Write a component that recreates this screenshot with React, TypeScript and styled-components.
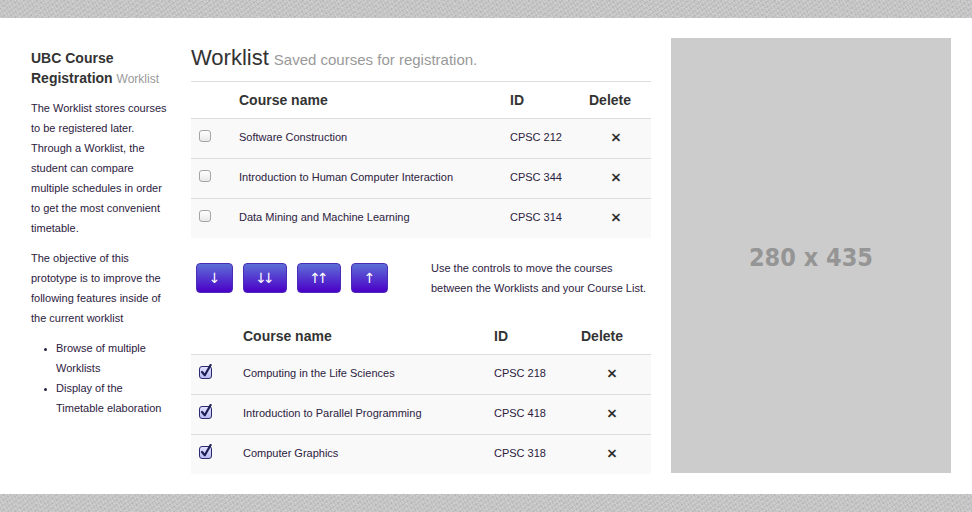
import React from "react";
import styled, { createGlobalStyle } from "styled-components";

const Global = createGlobalStyle`
  html, body { margin: 0; padding: 0; background: #fff; }
  body { font-family: "Liberation Sans", Arial, sans-serif; color: #2c2140; }
  * { box-sizing: border-box; }
`;

const Page = styled.div`
  width: 972px;
  height: 512px;
  display: flex;
  flex-direction: column;
  overflow: hidden;
`;

const Band = styled.div`
  height: 18px;
  flex: none;
  background-color: #c4c4c4;
  background-image:
    repeating-linear-gradient(63deg, rgba(255,255,255,0.16) 0 1px, transparent 1px 3px),
    repeating-linear-gradient(-37deg, rgba(0,0,0,0.07) 0 1px, transparent 1px 4px),
    repeating-linear-gradient(11deg, rgba(255,255,255,0.1) 0 1px, transparent 1px 5px);
`;

const Main = styled.main`
  flex: 1;
  background: #fff;
  display: grid;
  grid-template-columns: 140px 460px 280px;
  column-gap: 20px;
  padding: 20px 0 0 31px;
  align-items: start;
`;

const Sidebar = styled.aside`
  padding-top: 10px;
`;

const Brand = styled.h3`
  margin: 0 0 9px;
  font-size: 14px;
  line-height: 20px;
  font-weight: bold;
  color: #333;
`;

const Small = styled.small`
  font-size: 12px;
  font-weight: normal;
  color: #999;
`;

const Para = styled.p`
  margin: 0 0 10px;
  font-size: 11px;
  line-height: 20px;
  color: #2c2140;
`;

const List = styled.ul`
  margin: 0;
  padding-left: 25px;
  font-size: 11px;
  line-height: 20px;
  color: #2c2140;
  li::marker { font-size: 9px; }
`;

const Content = styled.section`
  display: flex;
  flex-direction: column;
`;

const Title = styled.h1`
  margin: 0;
  height: 40px;
  display: flex;
  align-items: baseline;
  gap: 5px;
  padding-top: 7px;
  font-size: 22px;
  line-height: 26px;
  font-weight: normal;
  color: #333;
`;

const Subtitle = styled.span`
  font-size: 15px;
  color: #999;
`;

const Table = styled.div<{ $top?: boolean }>`
  margin-top: ${(p) => (p.$top ? "3px" : "0")};
  display: flex;
  flex-direction: column;
`;

const Row = styled.div<{ $cols: string; $head?: boolean; $border?: boolean }>`
  display: grid;
  grid-template-columns: ${(p) => p.$cols};
  align-items: center;
  height: ${(p) => (p.$head ? "37px" : "40px")};
  padding-bottom: ${(p) => (p.$head ? "0" : "3px")};
  border-top: 1px solid ${(p) => (p.$border === false ? "transparent" : "#ddd")};
  background: ${(p) => (p.$head ? "#fff" : "#f9f9f9")};
  font-size: ${(p) => (p.$head ? "14px" : "11px")};
  font-weight: ${(p) => (p.$head ? "bold" : "normal")};
  color: ${(p) => (p.$head ? "#333" : "#2c2140")};
`;

const Cell = styled.div<{ $center?: boolean }>`
  padding-left: ${(p) => (p.$center ? "0" : "8px")};
  text-align: ${(p) => (p.$center ? "center" : "left")};
  white-space: nowrap;
`;

const BoxCell = styled.div`
  padding-left: 8px;
  display: flex;
  align-items: center;
`;

const EmptyBox = styled.span`
  display: block;
  width: 12px;
  height: 12px;
  margin-bottom: 2px;
  border: 1px solid #a5a5a5;
  border-radius: 3px;
  background: linear-gradient(#ffffff, #e8e8e8);
  box-shadow: inset 0 1px 1px rgba(255,255,255,0.9);
`;

const CheckSvg = styled.svg`
  display: block;
  margin-bottom: 4px;
`;

const Remove = styled.span`
  font-size: 17px;
  font-weight: normal;
  color: #222;
  display: inline-block;
  padding-top: 2px;
  -webkit-text-stroke: 0.4px #222;
`;

const Controls = styled.div`
  display: grid;
  grid-template-columns: 240px 1fr;
  align-items: center;
  margin: 20px 0 19px;
  height: 40px;
`;

const Buttons = styled.div`
  display: flex;
  gap: 10px;
  padding-left: 5px;
`;

const MoveButton = styled.button<{ $wide?: boolean }>`
  width: ${(p) => (p.$wide ? "44px" : "37px")};
  height: 30px;
  border: 1px solid #4a2cb8;
  border-radius: 4px;
  background: linear-gradient(#5d6fd6 0%, #5437cf 50%, #4a00c6 100%);
  color: #fff;
  font-family: "DejaVu Sans", "Liberation Sans", sans-serif;
  font-size: 14px;
  letter-spacing: -4px;
  padding: 0 4px 0 0;
  cursor: pointer;
`;

const Help = styled.p`
  margin: 0;
  font-size: 11px;
  line-height: 20px;
  color: #2c2140;
`;

const Placeholder = styled.div`
  width: 280px;
  height: 435px;
  background: #cccccc;
  display: flex;
  align-items: center;
  justify-content: center;
  font-family: "DejaVu Sans Condensed", "DejaVu Sans", sans-serif;
  font-weight: bold;
  font-size: 25px;
  color: #959595;
  padding-top: 4px;
`;

const CheckedBox = () => (
  <CheckSvg width="14" height="15" viewBox="0 0 14 15">
    <defs>
      <linearGradient id="cb" x1="0" y1="0" x2="0" y2="1">
        <stop offset="0" stopColor="#e3e3ff" />
        <stop offset="1" stopColor="#b7b9f2" />
      </linearGradient>
    </defs>
    <rect x="0.5" y="2.5" width="12" height="12" rx="2.5" fill="url(#cb)" stroke="#2b2a6e" />
    <path d="M3 8 L5.8 11.2 L11.6 1" fill="none" stroke="#1f1d55" strokeWidth="2.2" strokeLinecap="round" strokeLinejoin="round" />
  </CheckSvg>
);

type Course = { name: string; id: string };

const worklist: Course[] = [
  { name: "Software Construction", id: "CPSC 212" },
  { name: "Introduction to Human Computer Interaction", id: "CPSC 344" },
  { name: "Data Mining and Machine Learning", id: "CPSC 314" },
];

const courseList: Course[] = [
  { name: "Computing in the Life Sciences", id: "CPSC 218" },
  { name: "Introduction to Parallel Programming", id: "CPSC 418" },
  { name: "Computer Graphics", id: "CPSC 318" },
];

const CourseTable = ({
  courses,
  cols,
  checked,
  top,
}: {
  courses: Course[];
  cols: string;
  checked?: boolean;
  top?: boolean;
}) => (
  <Table $top={top}>
    <Row $cols={cols} $head $border={!!top}>
      <Cell />
      <Cell>Course name</Cell>
      <Cell>ID</Cell>
      <Cell>Delete</Cell>
    </Row>
    {courses.map((c) => (
      <Row $cols={cols} key={c.id}>
        <BoxCell>{checked ? <CheckedBox /> : <EmptyBox />}</BoxCell>
        <Cell>{c.name}</Cell>
        <Cell>{c.id}</Cell>
        <Cell $center>
          <Remove>×</Remove>
        </Cell>
      </Row>
    ))}
  </Table>
);

export default function App() {
  return (
    <Page>
      <Global />
      <Band />
      <Main>
        <Sidebar>
          <Brand>
            UBC Course Registration <Small>Worklist</Small>
          </Brand>
          <Para>
            The Worklist stores courses to be registered later. Through a Worklist, the student can
            compare multiple schedules in order to get the most convenient timetable.
          </Para>
          <Para>
            The objective of this prototype is to improve the following features inside of the
            current worklist
          </Para>
          <List>
            <li>Browse of multiple Worklists</li>
            <li>Display of the Timetable elaboration</li>
          </List>
        </Sidebar>
        <Content>
          <Title>
            Worklist <Subtitle>Saved courses for registration.</Subtitle>
          </Title>
          <CourseTable courses={worklist} cols="40px 271px 79px 70px" top />
          <Controls>
            <Buttons>
              <MoveButton>↓</MoveButton>
              <MoveButton $wide>↓↓</MoveButton>
              <MoveButton $wide>↑↑</MoveButton>
              <MoveButton>↑</MoveButton>
            </Buttons>
            <Help>
              Use the controls to move the courses
              <br />
              between the Worklists and your Course List.
            </Help>
          </Controls>
          <CourseTable courses={courseList} cols="44px 251px 87px 78px" checked />
        </Content>
        <Placeholder>280 x 435</Placeholder>
      </Main>
      <Band />
    </Page>
  );
}
